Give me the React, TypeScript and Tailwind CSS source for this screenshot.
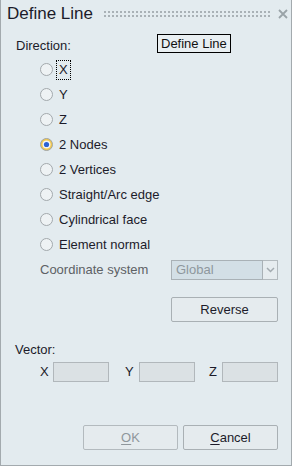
import React from "react";

const Radio = ({ checked }: { checked?: boolean }) => (
  <svg width="13" height="13" viewBox="0 0 13 13" className="shrink-0">
    {checked ? (
      <>
        <circle cx="6.5" cy="6.5" r="6" fill="#f3c84c" stroke="#9ea5a9" strokeWidth="1" />
        <circle cx="6.5" cy="6.5" r="4" fill="#f1f4f6" />
        <circle cx="6.5" cy="6.5" r="2.6" fill="#2a62d4" />
      </>
    ) : (
      <circle cx="6.5" cy="6.5" r="6" fill="#eef2f4" stroke="#a2a8ac" strokeWidth="1" />
    )}
  </svg>
);

const options = [
  "X",
  "Y",
  "Z",
  "2 Nodes",
  "2 Vertices",
  "Straight/Arc edge",
  "Cylindrical face",
  "Element normal",
];

export default function App() {
  return (
    <div className="w-[293px] h-[466px] bg-white">
      <div
        className="relative flex flex-col w-[292px] h-[466px] bg-[#e3ebef] border-l border-r border-b border-[#a3aaae] text-[#1c1b2a] text-[13px] leading-[16px]"
        style={{ fontFamily: '"Liberation Sans", Arial, sans-serif' }}
      >
        {/* Title bar */}
        <div className="flex h-[30px] items-start pt-[4px] pl-[6px]">
          <span className="text-[17px] leading-[20px] text-[#1c1b2a]">Define Line</span>
          <svg width="166" height="8" className="ml-[11px] mt-[7px]">
            <defs>
              <pattern id="dots" width="4" height="4" patternUnits="userSpaceOnUse">
                <rect x="0" y="0" width="2" height="2" fill="#a9b1b6" />
              </pattern>
            </defs>
            <rect x="0" y="0" width="166" height="6" fill="url(#dots)" />
          </svg>
          <svg width="10" height="10" viewBox="0 0 10 10" className="ml-[8px] mt-[5px]">
            <path d="M1 1 L9 9 M9 1 L1 9" stroke="#9aa3a8" strokeWidth="1.8" />
          </svg>
        </div>

        {/* Tooltip */}
        <div className="absolute left-[156px] top-[34px] w-[74px] h-[19px] border border-black bg-[#e9eff2] pl-[3px] text-[13px] leading-[17px] text-[#111]">
          Define Line
        </div>

        <div className="mt-[8px] pl-[15px]">Direction:</div>

        <div className="mt-[3px] flex flex-col">
          {options.map((o, i) => (
            <div key={o} className="flex h-[25px] items-center pl-[39px]">
              <Radio checked={i === 3} />
              <span
                className={
                  "ml-[3px] px-[2px] py-[1px] border " +
                  (i === 0 ? "border-dotted border-black" : "border-transparent")
                }
              >
                {o}
              </span>
            </div>
          ))}
        </div>

        <div className="mt-[3px] flex h-[20px] items-center pl-[39px]">
          <span className="w-[131px] text-[#5d6165]">Coordinate system</span>
          <div className="flex h-[20px]">
            <div className="w-[92px] h-[20px] border border-[#a9b1b6] bg-[#d3dfe6] pl-[4px] leading-[18px] text-[#8e979d]">
              Global
            </div>
            <div className="w-[15px] h-[20px] border border-l-0 border-[#b3babe] bg-[#e6ecef] flex items-center justify-center">
              <svg width="9" height="6" viewBox="0 0 9 6">
                <path d="M1 1 L4.5 4.5 L8 1" fill="none" stroke="#a3abb0" strokeWidth="1.5" />
              </svg>
            </div>
          </div>
        </div>

        <button className="mt-[17px] ml-[170px] w-[107px] h-[25px] rounded-[2px] border border-[#a9b0b4] bg-[#e5ebee] text-[13px] text-[#1c1b2a]">
          Reverse
        </button>

        <div className="mt-[20px] pl-[14px]">Vector:</div>

        <div className="mt-[4px] flex h-[20px] items-center pl-[39px]">
          <span className="w-[13px]">X</span>
          <div className="w-[56px] h-[20px] border border-[#b1b7bb] bg-[#dbe1e4]" />
          <span className="ml-[16px] w-[14px]">Y</span>
          <div className="w-[56px] h-[20px] border border-[#b1b7bb] bg-[#dbe1e4]" />
          <span className="ml-[14px] w-[13px]">Z</span>
          <div className="w-[56px] h-[20px] border border-[#b1b7bb] bg-[#dbe1e4]" />
        </div>

        <div className="mt-auto mb-[15px] ml-[82px] flex gap-[5px]">
          <button className="w-[95px] h-[25px] rounded-[2px] border border-[#b3babe] bg-[#e5ebee] text-[13px] text-[#8f979c]">
            <span className="underline underline-offset-2">O</span>K
          </button>
          <button className="w-[95px] h-[25px] rounded-[2px] border border-[#a9b0b4] bg-[#e5ebee] text-[13px] text-[#1c1b2a]">
            <span className="underline underline-offset-2">C</span>ancel
          </button>
        </div>
      </div>
    </div>
  );
}
